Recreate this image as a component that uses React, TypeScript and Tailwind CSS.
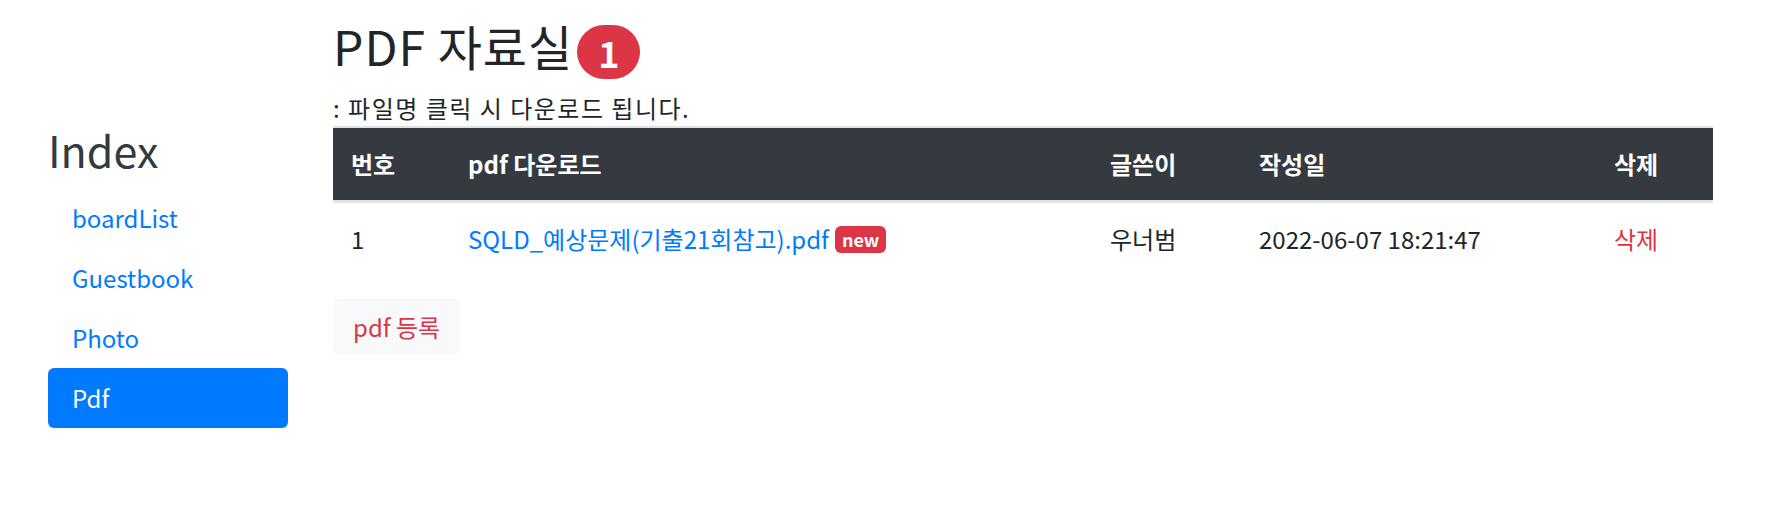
type NavItem = {
  label: string
  active?: boolean
}

type PdfRow = {
  no: number
  fileName: string
  isNew: boolean
  writer: string
  createdAt: string
}

const navItems: NavItem[] = [
  { label: "boardList" },
  { label: "Guestbook" },
  { label: "Photo" },
  { label: "Pdf", active: true },
]

const rows: PdfRow[] = [
  {
    no: 1,
    fileName: "SQLD_예상문제(기출21회참고).pdf",
    isNew: true,
    writer: "우너범",
    createdAt: "2022-06-07 18:21:47",
  },
]

function Sidebar() {
  return (
    <aside className="w-[288px] shrink-0 pl-[48px] pt-[121px]">
      <h2 className="text-[43px] font-normal leading-[56px] text-[#343a40]">Index</h2>
      <nav className="mt-[11px] flex flex-col">
        {navItems.map((item) => (
          <a
            key={item.label}
            href="#"
            className={`rounded-[6px] px-[24px] py-[12px] leading-[36px] ${
              item.active ? "bg-[#007bff] text-white" : "text-[#007bff]"
            }`}
          >
            {item.label}
          </a>
        ))}
      </nav>
    </aside>
  )
}

function PdfTable() {
  return (
    <table className="w-full table-fixed border-collapse text-left">
      <thead>
        <tr className="bg-[#343a40] text-white">
          <th className="w-[117px] border-t-2 border-b-[3px] border-[#dee2e6] p-[18px] font-bold">번호</th>
          <th className="w-[642px] border-t-2 border-b-[3px] border-[#dee2e6] p-[18px] font-bold">pdf 다운로드</th>
          <th className="w-[149px] border-t-2 border-b-[3px] border-[#dee2e6] p-[18px] font-bold">글쓴이</th>
          <th className="w-[355px] border-t-2 border-b-[3px] border-[#dee2e6] p-[18px] font-bold">작성일</th>
          <th className="border-t-2 border-b-[3px] border-[#dee2e6] p-[18px] font-bold">삭제</th>
        </tr>
      </thead>
      <tbody>
        {rows.map((row) => (
          <tr key={row.no}>
            <td className="p-[18px]">{row.no}</td>
            <td className="p-[18px]">
              <div className="flex items-center gap-[6px]">
                <a href="#" className="text-[#007bff]">
                  {row.fileName}
                </a>
                {row.isNew && (
                  <span className="rounded-[6px] bg-[#dc3545] px-[7px] py-[4.5px] text-[18px] font-bold leading-[18px] text-white">
                    new
                  </span>
                )}
              </div>
            </td>
            <td className="p-[18px]">{row.writer}</td>
            <td className="p-[18px]">{row.createdAt}</td>
            <td className="p-[18px]">
              <a href="#" className="text-[#dc3545]">
                삭제
              </a>
            </td>
          </tr>
        ))}
      </tbody>
    </table>
  )
}

export default function App() {
  return (
    <div className="flex min-h-[528px] bg-white font-['Noto_Sans_CJK_KR',sans-serif] text-[24px] leading-[36px] text-[#212529]">
      <Sidebar />
      <main className="ml-[45px] w-[1380px] pt-[17px]">
        <div className="flex items-start">
          <h2 className="text-[48px] font-normal leading-[56px] tracking-[1px]">PDF 자료실</h2>
          <span className="ml-[4px] mt-[8px] rounded-full bg-[#dc3545] px-[21px] py-[9px] text-[36px] font-bold leading-[36px] text-white">
            1
          </span>
        </div>
        <p className="mt-[11px] tracking-[1.5px]">: 파일명 클릭 시 다운로드 됩니다.</p>
        <PdfTable />
        <button
          type="button"
          className="mt-[24px] rounded-[6px] bg-[#f8f9fa] px-[20px] py-[10px] leading-[36px] text-[#dc3545]"
        >
          pdf 등록
        </button>
      </main>
    </div>
  )
}
